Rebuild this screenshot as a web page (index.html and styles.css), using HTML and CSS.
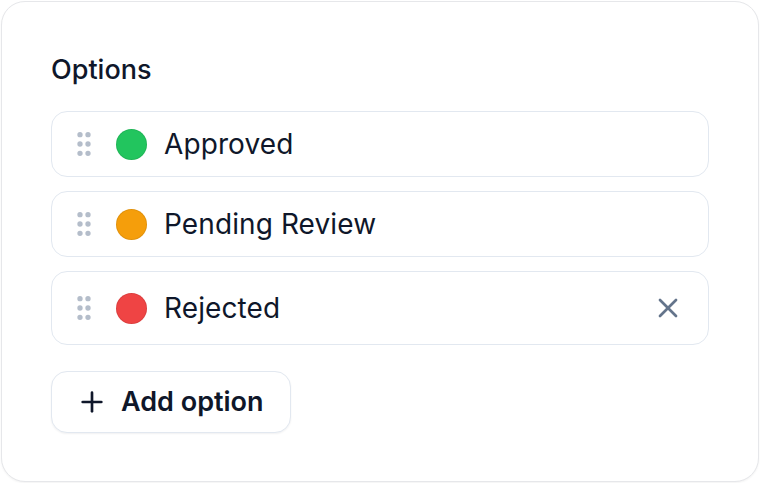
FILE: index.html
```html
<!DOCTYPE html>
<html lang="en">
<head>
<meta charset="utf-8">
<title>Options</title>
<link rel="stylesheet" href="styles.css">
</head>
<body>
<div class="card">
  <div class="label">Options</div>
  <div class="list">
    <div class="row">
      <svg class="grip" viewBox="0 0 24 24" fill="none" stroke="currentColor" stroke-width="2"><circle cx="9" cy="5" r="1"/><circle cx="9" cy="12" r="1"/><circle cx="9" cy="19" r="1"/><circle cx="15" cy="5" r="1"/><circle cx="15" cy="12" r="1"/><circle cx="15" cy="19" r="1"/></svg>
      <span class="dot green"></span>
      <span class="name">Approved</span>
    </div>
    <div class="row">
      <svg class="grip" viewBox="0 0 24 24" fill="none" stroke="currentColor" stroke-width="2"><circle cx="9" cy="5" r="1"/><circle cx="9" cy="12" r="1"/><circle cx="9" cy="19" r="1"/><circle cx="15" cy="5" r="1"/><circle cx="15" cy="12" r="1"/><circle cx="15" cy="19" r="1"/></svg>
      <span class="dot amber"></span>
      <span class="name">Pending Review</span>
    </div>
    <div class="row">
      <svg class="grip" viewBox="0 0 24 24" fill="none" stroke="currentColor" stroke-width="2"><circle cx="9" cy="5" r="1"/><circle cx="9" cy="12" r="1"/><circle cx="9" cy="19" r="1"/><circle cx="15" cy="5" r="1"/><circle cx="15" cy="12" r="1"/><circle cx="15" cy="19" r="1"/></svg>
      <span class="dot red"></span>
      <span class="name">Rejected</span>
      <button class="remove" type="button" aria-label="Remove">
        <svg viewBox="0 0 24 24" fill="none" stroke="currentColor" stroke-width="2" stroke-linecap="round" stroke-linejoin="round"><path d="M18 6 6 18"/><path d="m6 6 12 12"/></svg>
      </button>
    </div>
  </div>
  <button class="add" type="button">
    <svg viewBox="0 0 24 24" fill="none" stroke="currentColor" stroke-width="2" stroke-linecap="round" stroke-linejoin="round"><path d="M5 12h14"/><path d="M12 5v14"/></svg>
    <span>Add option</span>
  </button>
</div>
</body>
</html>
```

FILE: styles.css
```css
* { box-sizing: border-box; }

html, body {
  margin: 0;
  padding: 0;
  background: #ffffff;
  font-family: Inter, "Noto Sans", sans-serif;
  color: #0f172a;
}

.card {
  margin: 1px;
  width: 758px;
  height: 481px;
  border: 1px solid #e6e7ea;
  border-radius: 24px;
  background: #ffffff;
  box-shadow: 0 1px 2px rgba(0, 0, 0, 0.05);
  padding: 48px 49px;
  display: flex;
  flex-direction: column;
  align-items: flex-start;
}

.label {
  font-size: 27px;
  font-weight: 500;
  line-height: 40px;
  height: 40px;
  margin-bottom: 21px;
}

.list {
  width: 100%;
  display: flex;
  flex-direction: column;
  gap: 14px;
}

.row {
  display: flex;
  align-items: center;
  gap: 16px;
  border: 1px solid #e2e8f0;
  border-radius: 16px;
  padding: 16px 20px 16px 16px;
  min-height: 66px;
}

.grip {
  width: 32px;
  height: 32px;
  color: #b4bdca;
  flex: none;
}

.dot {
  width: 31px;
  height: 31px;
  border-radius: 50%;
  flex: none;
  border: 1px solid rgba(0, 0, 0, 0.08);
}

.green { background: #22c55e; }
.amber { background: #f59e0b; }
.red { background: #ef4444; }

.name {
  flex: 1;
  font-size: 28px;
  line-height: 32px;
  letter-spacing: 0.1px;
  margin-left: 1px;
}

.remove {
  width: 40px;
  height: 40px;
  padding: 4px;
  border: none;
  background: none;
  color: #64748b;
  display: flex;
  align-items: center;
  justify-content: center;
  flex: none;
}

.remove svg {
  width: 32px;
  height: 32px;
}

.add {
  margin-top: 26px;
  height: 62px;
  display: flex;
  align-items: center;
  gap: 13px;
  padding: 14px 26px 14px 24px;
  border: 1px solid #e2e8f0;
  border-radius: 16px;
  background: #ffffff;
  box-shadow: 0 1px 2px rgba(15, 23, 42, 0.06);
  font-family: Inter, "Noto Sans", sans-serif;
  font-size: 27px;
  font-weight: 600;
  color: #0f172a;
  line-height: 32px;
}

.add svg {
  width: 32px;
  height: 32px;
  flex: none;
}
```
